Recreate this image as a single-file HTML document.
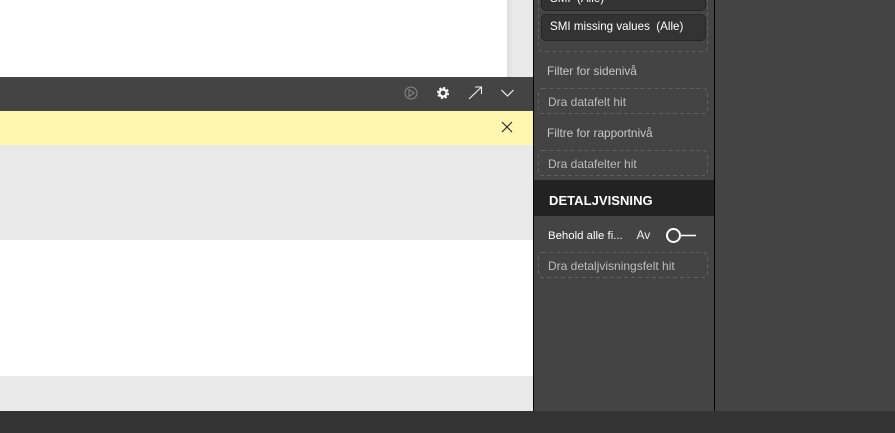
<!DOCTYPE html>
<html><head><meta charset="utf-8">
<style>
html,body{margin:0;padding:0;width:895px;height:433px;overflow:hidden;background:#444;font-family:"Liberation Sans",sans-serif}
div{position:absolute;box-sizing:border-box}
.t{white-space:nowrap;font-size:12px;line-height:16px}
.b{left:541px;width:165px;background:#333;border:1px solid #262626;border-radius:5px}
</style></head><body>
<div style="left:0;top:0;width:507px;height:77px;background:#fff"></div>
<div style="left:507px;top:0;width:26px;height:77px;background:linear-gradient(90deg,#dedede,#e9e9e9 6px)"></div>
<div style="left:0;top:77px;width:533px;height:34px;background:#444"></div>
<div style="left:0;top:111px;width:533px;height:34px;background:#fff7b0"></div>
<div style="left:0;top:145px;width:533px;height:95px;background:#e9e9e9"></div>
<div style="left:0;top:240px;width:533px;height:136px;background:#fff"></div>
<div style="left:0;top:376px;width:533px;height:35px;background:#e9e9e9"></div>
<div style="left:533px;top:0;width:1px;height:411px;background:#000"></div>
<div style="left:714px;top:0;width:1px;height:411px;background:#000"></div>
<div style="left:0;top:411px;width:895px;height:22px;background:#333"></div>

<div class="b" style="top:-16px;height:27px"></div>
<div class="t" style="left:550px;top:-9px;color:#fff;font-size:11.6px">SMI&nbsp; (Alle)</div>
<div class="b" style="top:14px;height:27px"></div>
<div class="t" style="left:550px;top:19px;color:#fff;font-size:11.6px">SMI missing values&nbsp; (Alle)</div>

<svg style="position:absolute;left:0;top:0" width="895" height="433" fill="none">
<circle cx="411" cy="93" r="6" stroke="#8a8a8a" stroke-width="1"/>
<path d="M409 89.5L414 93L409 96.500Z" stroke="#8a8a8a" stroke-width="1"/>
<circle cx="443" cy="93" r="3.500" stroke="#fff" stroke-width="2.200"/>
<circle cx="443" cy="93" r="5.200" stroke="#fff" stroke-width="1.600" stroke-dasharray="2.200 1.880"/>
<path d="M469 99L481.500 87M475 87h6.500v7" stroke="#f2f2f2" stroke-width="1.100"/>
<path d="M501.500 90L507.500 96L513.500 90" stroke="#f2f2f2" stroke-width="1.200"/>
<path d="M502 122L512 132M512 122L502 132" stroke="#222" stroke-width="1.100"/>
<circle cx="673.500" cy="235.500" r="6.500" stroke="#fff" stroke-width="2"/>
<path d="M680 235.500H696" stroke="#fff" stroke-width="1.500"/>
<g stroke="#606060" stroke-width="1" stroke-dasharray="4 3">
<rect x="538.500" y="-20.500" width="169" height="72" rx="4"/>
<rect x="538.500" y="88.500" width="169" height="25" rx="4"/>
<rect x="538.500" y="150.500" width="169" height="25" rx="4"/>
<rect x="538.500" y="252.500" width="169" height="25" rx="4"/>
</g>
</svg>

<div class="t" style="left:547px;top:63px;color:#c8c8c8;font-size:11.8px">Filter for sidenivå</div>
<div class="t" style="left:548px;top:94px;color:#bcbcbc">Dra datafelt hit</div>
<div class="t" style="left:547px;top:125px;color:#c8c8c8;font-size:11.8px">Filtre for rapportnivå</div>
<div class="t" style="left:548px;top:156px;color:#bcbcbc">Dra datafelter hit</div>

<div style="left:534px;top:180px;width:180px;height:36px;background:#222"></div>
<div class="t" style="left:549px;top:193px;color:#fff;font-weight:bold;font-size:13px;letter-spacing:0.05px">DETALJVISNING</div>

<div class="t" style="left:548px;top:228px;color:#fff;font-size:11.4px">Behold alle fi...</div>
<div class="t" style="left:636.500px;top:227px;color:#f0f0f0">Av</div>
<div class="t" style="left:548px;top:258px;color:#bcbcbc">Dra detaljvisningsfelt hit</div>
</body></html>
